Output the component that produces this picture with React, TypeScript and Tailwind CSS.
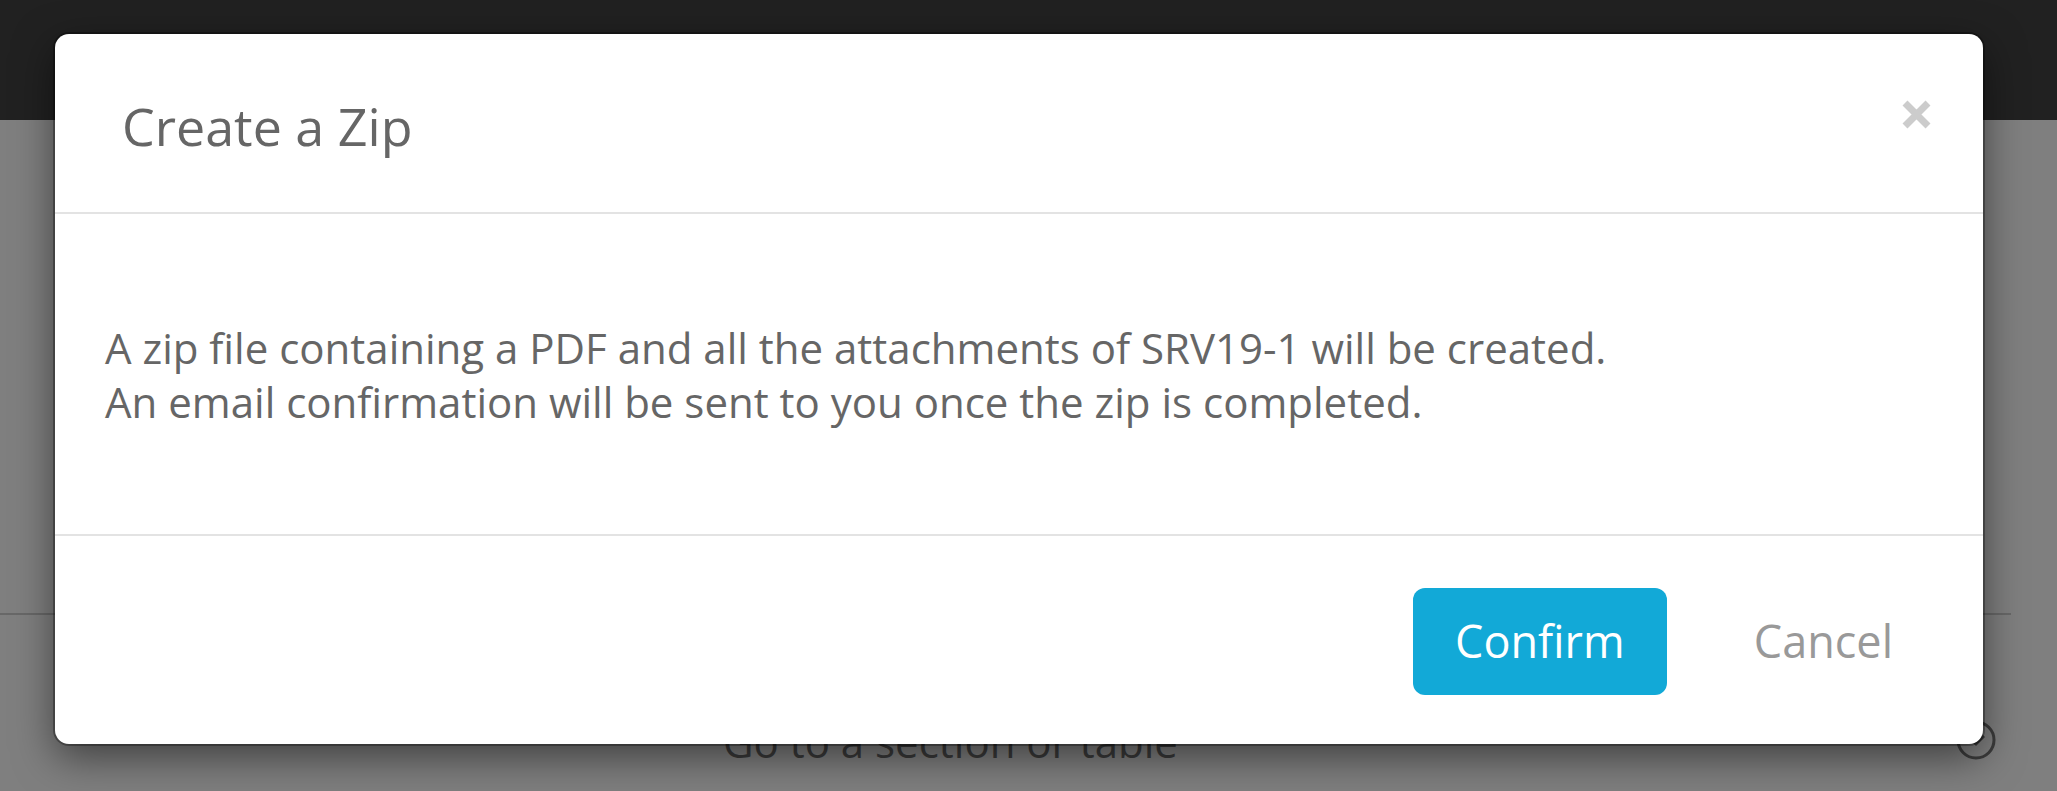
import { useState } from 'react';

const font = { fontFamily: '"Open Sans", "Noto Sans", sans-serif' };

function CloseIcon() {
  return (
    <svg width="29" height="29" viewBox="0 0 29 29" fill="none">
      <path d="M3 3 L26 26 M26 3 L3 26" stroke="#cccccc" strokeWidth="7" />
    </svg>
  );
}

function PageBehind() {
  // the page under the backdrop, already dimmed
  return (
    <div className="flex h-full w-full flex-col bg-[#7f7f7f]">
      <div className="h-[120px] w-full bg-[#212121]" />
      <div className="mt-[493px] w-[2011px] border-b-2 border-[#686868]" />
      <div className="mt-[95px] flex w-[2011px] items-start">
        <div className="pl-[723px] text-[42px] leading-normal text-[#3a3a3a]">Go to a section or table</div>
        <svg className="ml-auto mr-[15px] mt-[10px]" width="40" height="40" viewBox="0 0 40 40" fill="none">
          <circle cx="20" cy="20" r="18" stroke="#3c3c3c" strokeWidth="3" />
          <path d="M12 16 L20 24 L28 16" stroke="#3c3c3c" strokeWidth="3" />
        </svg>
      </div>
    </div>
  );
}

export default function App() {
  const [open, setOpen] = useState(true);

  return (
    <div className="relative h-[791px] w-full overflow-hidden" style={font}>
      <PageBehind />

      {open && (
        <div className="absolute left-[55px] top-[34px] flex h-[710px] w-[1928px] flex-col rounded-[14px] bg-white shadow-[0_0_0_2px_rgba(0,0,0,0.3),0_13px_40px_rgba(0,0,0,0.5)]">
          <div className="flex h-[180px] shrink-0 items-start justify-between border-b-2 border-[#e3e3e3] pl-[67px] pr-[52px] pt-[53px]">
            <h2 className="text-[52px] font-normal leading-normal text-[#666666]">Create a Zip</h2>
            <button className="mt-[13px]" onClick={() => setOpen(false)}>
              <CloseIcon />
            </button>
          </div>

          <div className="flex h-[322px] shrink-0 flex-col justify-center border-b-2 border-[#e3e3e3] pl-[50px] pt-[2px] text-[42px] leading-[54px] text-[#666666]">
            <p>A zip file containing a PDF and all the attachments of SRV19-1 will be created.</p>
            <p>An email confirmation will be sent to you once the zip is completed.</p>
          </div>

          <div className="flex flex-1 items-center justify-end gap-[43px] pr-[46px] pt-[2px]">
            <button className="flex h-[107px] w-[254px] items-center justify-center rounded-[12px] bg-[#12a9d7] text-[45px] text-white">
              Confirm
            </button>
            <button className="px-[44px] text-[45px] text-[#999999]" onClick={() => setOpen(false)}>
              Cancel
            </button>
          </div>
        </div>
      )}
    </div>
  );
}
